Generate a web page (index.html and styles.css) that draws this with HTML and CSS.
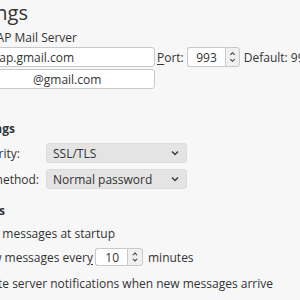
FILE: index.html
```html
<!DOCTYPE html>
<html>
<head>
<meta charset="utf-8">
<link rel="stylesheet" href="styles.css">
</head>
<body>
<div class="page">
  <div class="title">Server Settings</div>
  <div class="type">Server Type: IMAP Mail Server</div>

  <div class="row row-server">
    <div class="entry entry-wide"><span class="value value-host">imap.gmail.com</span></div>
    <span class="port-label"><u>P</u>ort:</span>
    <div class="spin spin-port">
      <div class="spin-field">993</div>
      <div class="spin-buttons">
        <svg width="15" height="20" viewBox="0 0 15 20"><path d="M5 7.5 L7.5 5 L10 7.5 M5 12.5 L7.5 15 L10 12.5" fill="none" stroke="#3c3c3c" stroke-width="1.2"/></svg>
      </div>
    </div>
    <span class="default">Default: 993</span>
  </div>

  <div class="row row-user">
    <div class="entry entry-wide"><span class="value value-user">@gmail.com</span></div>
  </div>

  <div class="header header-security">Security Settings</div>

  <div class="row row-security">
    <span class="label label-security">Connection security:</span>
    <div class="combo combo-security">
      <span>SSL/TLS</span>
      <svg width="8" height="6" viewBox="0 0 8 6"><path d="M1 1.5 L4 4.5 L7 1.5" fill="none" stroke="#3c3c3c" stroke-width="1.5"/></svg>
    </div>
  </div>

  <div class="row row-auth">
    <span class="label label-auth">Authentication method:</span>
    <div class="combo combo-auth">
      <span>Normal password</span>
      <svg width="8" height="6" viewBox="0 0 8 6"><path d="M1 1.5 L4 4.5 L7 1.5" fill="none" stroke="#3c3c3c" stroke-width="1.5"/></svg>
    </div>
  </div>

  <div class="header header-server">Server Settings</div>

  <div class="row check check-startup"><span class="label label-startup">Check for new messages at startup</span></div>

  <div class="row check check-every">
    <span class="label label-every">Check for new messages ever<u>y</u></span>
    <div class="spin spin-minutes">
      <div class="spin-field">10</div>
      <div class="spin-buttons">
        <svg width="16" height="18" viewBox="0 0 16 18"><path d="M5.5 7 L8 4.5 L10.5 7 M5.5 11 L8 13.5 L10.5 11" fill="none" stroke="#3c3c3c" stroke-width="1.2"/></svg>
      </div>
    </div>
    <span class="minutes">minutes</span>
  </div>

  <div class="row check check-notify"><span class="label label-notify">Allow immediate server notifications when new messages arrive</span></div>
</div>
</body>
</html>
```

FILE: styles.css
```css
html, body {
  margin: 0;
  padding: 0;
}
body {
  background: #f7f7f7;
  color: #333333;
  font-family: "Open Sans", "DejaVu Sans", sans-serif;
  font-size: 12px;
  overflow: hidden;
  width: 300px;
  height: 300px;
}
.page {
  margin-left: -150px;
  width: 600px;
  white-space: nowrap;
}
.title {
  height: 26px;
  line-height: 26px;
  font-size: 20px;
  width: 178px;
  text-align: right;
}
.type {
  margin-top: 2px;
  height: 19px;
  line-height: 19px;
  width: 227px;
  text-align: right;
}
.row {
  display: flex;
  align-items: center;
  height: 20px;
}
.entry {
  box-sizing: border-box;
  height: 20px;
  background: #ffffff;
  border: 1px solid #c9c9c9;
  border-radius: 3px;
  display: flex;
  align-items: center;
}
.entry-wide {
  margin-left: 130px;
  width: 175px;
}
.value-host {
  display: block;
  width: 93px;
  text-align: right;
}
.value-user {
  padding-left: 52px;
}
.row-user {
  margin-top: 2px;
}
.port-label {
  margin-left: 2px;
}
u {
  text-decoration: underline;
  text-underline-offset: 2px;
}
.spin {
  display: flex;
  height: 20px;
}
.spin-field {
  box-sizing: border-box;
  height: 100%;
  background: #ffffff;
  border: 1px solid #c9c9c9;
  border-right: none;
  border-radius: 3px 0 0 3px;
  text-align: right;
  display: flex;
  align-items: center;
  justify-content: flex-end;
}
.spin-buttons {
  box-sizing: border-box;
  height: 100%;
  background: #f0f0f0;
  border: 1px solid #c9c9c9;
  border-radius: 0 3px 3px 0;
  display: flex;
  align-items: center;
  justify-content: center;
}
.spin-port {
  margin-left: 3px;
}
.spin-port .spin-field {
  width: 38px;
  padding-right: 8px;
}
.spin-port .spin-buttons {
  width: 15px;
}
.default {
  margin-left: 4px;
}
.header {
  font-weight: bold;
  height: 20px;
  line-height: 20px;
  text-align: right;
}
.header-security {
  margin-top: 30px;
  width: 165px;
}
.label {
  display: block;
  text-align: right;
}
.combo {
  box-sizing: border-box;
  height: 20px;
  width: 141px;
  background: #e4e4e4;
  border: 1px solid #dcdcdc;
  border-radius: 3px;
  display: flex;
  align-items: center;
  justify-content: space-between;
  padding: 0 7px 0 6px;
}
.row-security {
  margin-top: 4px;
}
.label-security {
  width: 170px;
}
.combo-security {
  margin-left: 26px;
}
.row-auth {
  margin-top: 6px;
}
.label-auth {
  width: 189px;
}
.combo-auth {
  margin-left: 7px;
}
.header-server {
  margin-top: 12px;
  width: 155px;
}
.check-startup {
  margin-top: 2px;
}
.label-startup {
  width: 265px;
}
.check-every {
  margin-top: 4px;
}
.label-every {
  width: 243px;
}
.spin-minutes {
  margin-left: 2px;
  height: 18px;
}
.spin-minutes .spin-field {
  width: 32px;
  padding-right: 8px;
}
.spin-minutes .spin-buttons {
  width: 16px;
}
.minutes {
  margin-left: 5px;
}
.check-notify {
  margin-top: 6px;
}
.label-notify {
  width: 423px;
}
```
